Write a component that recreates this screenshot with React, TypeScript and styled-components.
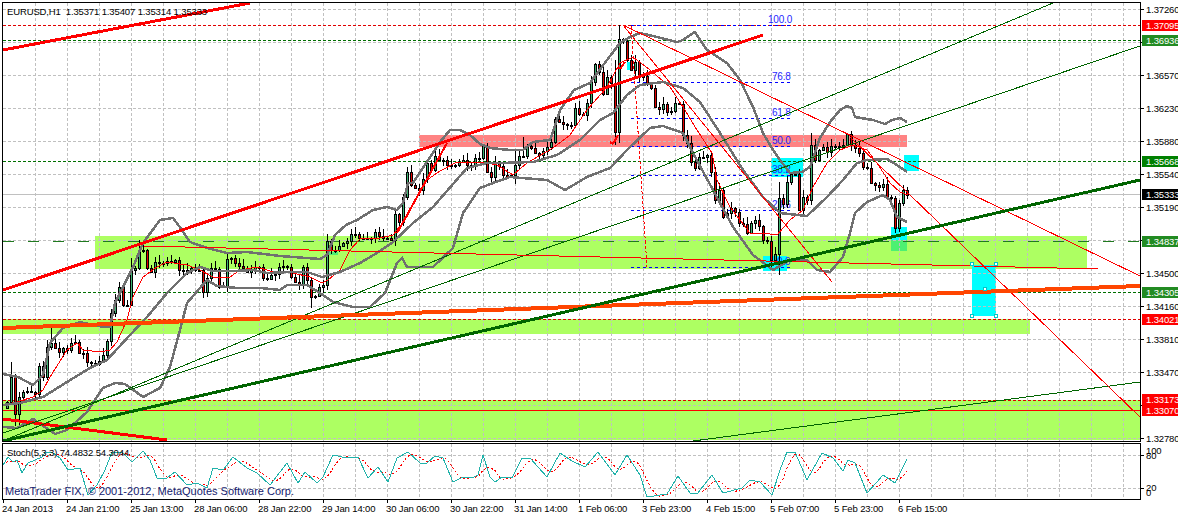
import React from "react";
import styled, { createGlobalStyle } from "styled-components";

// every chart coordinate below is a page pixel, the svg viewBox takes care of the pane offset
const closes = [
  402, 377, 414, 397, 392, 391, 392, 394, 366, 377, 347, 343, 348, 352, 348, 350,
  343, 342, 353, 353, 362, 363, 364, 361, 355, 341, 313, 300, 287, 305, 305, 270,
  268, 250, 250, 268, 272, 262, 263, 263, 261, 262, 260, 270, 270, 271, 268, 270,
  270, 292, 278, 268, 269, 287, 286, 259, 258, 263, 266, 268, 272, 269, 267, 267,
  278, 279, 275, 274, 267, 266, 267, 277, 282, 284, 267, 280, 297, 296, 287, 285,
  241, 250, 250, 246, 243, 241, 234, 234, 238, 238, 238, 238, 232, 236, 238, 238,
  240, 214, 222, 197, 172, 185, 188, 190, 179, 163, 170, 156, 160, 160, 165, 165,
  165, 162, 160, 165, 166, 158, 158, 146, 172, 177, 163, 166, 175, 177, 175, 165,
  156, 156, 146, 148, 153, 155, 151, 147, 142, 119, 122, 124, 125, 125, 108, 114,
  115, 103, 82, 64, 72, 94, 77, 83, 132, 39, 41, 60, 70, 62, 77, 76,
  83, 88, 107, 109, 104, 112, 111, 103, 104, 135, 143, 162, 168, 157, 157, 155,
  172, 200, 190, 217, 213, 208, 212, 223, 224, 233, 223, 220, 226, 240, 241, 260,
  254, 198, 204, 182, 174, 174, 210, 197, 200, 145, 160, 150, 147, 152, 146, 146,
  147, 145, 134, 145, 148, 153, 167, 168, 183, 185, 187, 184, 197, 198, 228, 203,
  190, 195,
];

const wickOverrides: Record<number, [number, number]> = {
  11: [362, 404],
  15: [374, 426],
  19: [392, 425],
  51: [328, 350],
  119: [282, 303],
  131: [258, 295],
  139: [240, 270],
  311: [278, 308],
  515: [150, 184],
  523: [137, 158],
  615: [60, 145],
  619: [25, 143],
  771: [236, 268],
  779: [182, 275],
  811: [133, 205],
  895: [196, 233],
  899: [200, 232],
  903: [185, 206],
};

const upperBand =
  "3,374 18,377 33,385 43,375 50,343 63,328 80,322 97,326 110,327 115,303 133,267 143,243 160,220 173,218 182,230 190,242 207,248 227,253 247,252 280,256 320,259 327,255 335,235 346,225 357,220 373,210 387,207 397,210 403,203 408,183 413,183 427,162 440,142 450,130 460,130 470,135 480,144 490,148 510,150 523,150 533,142 550,140 553,132 560,110 574,90 590,83 607,60 620,43 630,37 640,33 657,37 677,42 683,40 695,32 707,50 727,63 740,80 753,107 763,133 773,150 780,160 790,173 802,172 810,167 820,138 830,122 840,110 847,106 852,108 855,117 873,120 885,124 892,120 900,118 907,122";
const middleBand =
  "3,405 20,403 43,397 67,382 90,368 107,360 130,335 147,317 167,293 187,273 200,267 213,271 233,271 253,270 267,273 290,272 307,272 322,277 340,272 360,263 377,253 393,242 413,223 433,207 467,168 487,163 500,163 533,162 557,155 580,140 600,120 613,113 627,95 640,85 663,82 683,88 700,102 720,133 743,170 763,197 780,213 807,216 827,197 843,180 857,163 867,160 887,159 897,165 907,172";
const lowerBand =
  "3,427 17,428 33,419 55,434 67,430 87,412 103,388 115,383 125,384 143,397 160,388 170,367 180,330 187,303 200,288 207,280 217,286 237,288 260,288 280,290 287,285 307,285 323,295 333,302 353,307 370,307 385,293 397,263 402,258 407,267 433,267 453,248 463,213 480,188 493,183 510,177 547,180 565,190 587,177 610,168 627,150 650,128 663,126 683,133 693,153 713,190 733,227 753,255 773,270 790,260 807,260 817,270 830,272 843,257 850,233 855,213 867,202 883,195 890,200 897,217 907,222";
const movingAverage =
  "3,405 17,402 33,397 43,390 50,377 67,350 77,343 83,350 100,352 110,350 117,342 127,320 133,297 143,277 157,267 167,262 187,265 200,270 213,277 230,277 240,270 257,267 273,272 293,273 310,277 322,283 328,280 340,270 350,250 360,239 380,238 393,235 407,217 420,190 427,180 440,171 457,162 470,163 483,162 497,165 513,175 527,163 553,148 570,135 587,110 607,87 620,63 633,57 650,70 670,87 683,107 697,130 712,153 717,180 730,207 750,233 763,233 777,235 790,220 803,210 813,187 827,163 840,150 853,145 867,150 877,163 890,183 900,192 908,195";

const stochMain: [number, number][] = [
  [3, 465], [8, 457], [13, 462], [17, 460], [22, 473], [28, 463], [35, 460], [42, 457], [45, 452], [53, 453],
  [60, 458], [68, 470], [80, 468], [88, 495], [97, 485], [105, 470], [112, 452], [123, 453], [132, 462], [143, 451],
  [150, 460], [157, 478], [167, 478], [175, 472], [187, 485], [197, 483], [207, 488], [213, 468], [223, 470], [233, 457],
  [247, 468], [257, 473], [270, 485], [287, 463], [298, 483], [305, 472], [317, 483], [323, 477], [333, 455], [347, 458],
  [358, 457], [368, 478], [378, 467], [388, 482], [397, 458], [408, 452], [420, 463], [427, 463], [435, 456], [443, 458],
  [453, 482], [463, 477], [472, 478], [478, 475], [483, 455], [490, 477], [495, 482], [502, 477], [512, 478], [522, 458],
  [530, 458], [547, 477], [560, 453], [572, 461], [585, 467], [598, 452], [615, 475], [627, 455], [640, 475], [647, 497],
  [667, 494], [678, 476], [690, 493], [697, 494], [712, 475], [723, 493], [742, 488], [750, 480], [760, 482], [772, 495],
  [780, 470], [787, 452], [795, 452], [807, 480], [822, 453], [833, 458], [843, 471], [848, 460], [855, 463], [867, 493],
  [877, 482], [883, 475], [895, 483], [907, 459],
];

const zones = [
  { x: 95, y: 236, w: 992, h: 33, fill: "#adff62" },
  { x: 3, y: 319, w: 1027, h: 15, fill: "#adff62" },
  { x: 3, y: 400, w: 1137, h: 40, fill: "#adff62" },
  { x: 419, y: 135, w: 488, h: 12, fill: "#ff8383" },
  { x: 771, y: 158, w: 32, h: 19, fill: "#00ffff" },
  { x: 904, y: 155, w: 15, h: 16, fill: "#00ffff" },
  { x: 763, y: 256, w: 24, h: 15, fill: "#00ffff" },
  { x: 891, y: 227, w: 16, h: 13, fill: "#00ffff" },
  { x: 891, y: 240, w: 16, h: 11, fill: "#4df072" },
  { x: 328, y: 252, w: 10, h: 3, fill: "#4df072" },
  { x: 627, y: 62, w: 3, h: 8, fill: "#00ffff" },
  { x: 972, y: 265, w: 24, h: 51, fill: "#00ffff" },
];

const levels = [
  { y: 25, color: "#e00000", dash: "3 2" },
  { y: 40, color: "#007000", dash: "3 2" },
  { y: 161, color: "#007000", dash: "3 2" },
  { y: 241, color: "#1f7a1f", dash: "11 14" },
  { y: 292, color: "#007000", dash: "3 2" },
  { y: 319, color: "#e00000", dash: "3 2" },
  { y: 400, color: "#e00000", dash: "3 2" },
  { y: 410, color: "#ff0000" },
];

const trendLines = [
  { x1: 3, y1: 50, x2: 250, y2: 3, color: "#ff0000", width: 3 },
  { x1: 3, y1: 290, x2: 763, y2: 35, color: "#ff0000", width: 3 },
  { x1: 3, y1: 419, x2: 167, y2: 440, color: "#ff0000", width: 3 },
  { x1: 3, y1: 441, x2: 1053, y2: 3, color: "#006400", width: 1 },
  { x1: 3, y1: 433, x2: 1140, y2: 46, color: "#006400", width: 1 },
  { x1: 693, y1: 441, x2: 1140, y2: 382, color: "#006400", width: 1 },
  { x1: 143, y1: 246, x2: 1098, y2: 269, color: "#ff0000", width: 1 },
  { x1: 623, y1: 25, x2: 1140, y2: 276, color: "#ff0000", width: 1 },
  { x1: 623, y1: 25, x2: 832, y2: 282, color: "#ff0000", width: 1 },
  { x1: 850, y1: 137, x2: 1140, y2: 417, color: "#ff0000", width: 1 },
  { x1: 397, y1: 233, x2: 447, y2: 143, color: "#ff0000", width: 2 },
  { x1: 620, y1: 83, x2: 653, y2: 72, color: "#ff0000", width: 1 },
  { x1: 610, y1: 142, x2: 613, y2: 144, color: "#ff0000", width: 2 },
  { x1: 613, y1: 144, x2: 618, y2: 135, color: "#ff0000", width: 2 },
  { x1: 618, y1: 67, x2: 620, y2: 69, color: "#ff0000", width: 2 },
  { x1: 620, y1: 69, x2: 625, y2: 62, color: "#ff0000", width: 2 },
  { x1: 3, y1: 328, x2: 1140, y2: 286, color: "#ff4500", width: 4 },
  { x1: 3, y1: 441, x2: 1140, y2: 180, color: "#006400", width: 3 },
];

const fibLevels = [
  { y: 25, label: "100.0", x: 768 },
  { y: 82, label: "76.8", x: 772 },
  { y: 118, label: "61.8", x: 772 },
  { y: 146, label: "50.0", x: 772 },
  { y: 175, label: "38.2", x: 772 },
  { y: 210, label: "23.6", x: 772 },
  { y: 267, label: "0.0", x: 777 },
];

const handles = [
  [972, 264],
  [996, 264],
  [985, 289],
  [972, 316],
  [996, 316],
];

const gridRows = [9, 42, 75, 108, 141, 174, 207, 240, 273, 306, 339, 372, 405, 438];
const gridColumns = Array.from({ length: 35 }, (_, i) => 35 + i * 32);

const priceLabels: { y: number; text: string; tone?: string }[] = [
  { y: 9, text: "1.37260" },
  { y: 25, text: "1.37095", tone: "#ff0000" },
  { y: 40, text: "1.36936", tone: "#228b22" },
  { y: 75, text: "1.36570" },
  { y: 108, text: "1.36230" },
  { y: 141, text: "1.35880" },
  { y: 161, text: "1.35668", tone: "#008000" },
  { y: 174, text: "1.35540" },
  { y: 194, text: "1.35333", tone: "#000000" },
  { y: 207, text: "1.35190" },
  { y: 241, text: "1.34837", tone: "#228b22" },
  { y: 273, text: "1.34500" },
  { y: 292, text: "1.34305", tone: "#228b22" },
  { y: 306, text: "1.34160" },
  { y: 319, text: "1.34021", tone: "#ff0000" },
  { y: 339, text: "1.33810" },
  { y: 372, text: "1.33470" },
  { y: 399, text: "1.33173", tone: "#ff0000" },
  { y: 410, text: "1.33070", tone: "#ff0000" },
  { y: 438, text: "1.32780" },
];

const stochLabels = [
  { y: 450, text: "100" },
  { y: 455, text: "80" },
  { y: 487, text: "20" },
  { y: 492, text: "0" },
];

const timeLabels = [
  "24 Jan 2013",
  "24 Jan 21:00",
  "25 Jan 13:00",
  "28 Jan 06:00",
  "28 Jan 22:00",
  "29 Jan 14:00",
  "30 Jan 06:00",
  "30 Jan 22:00",
  "31 Jan 14:00",
  "1 Feb 06:00",
  "3 Feb 23:00",
  "4 Feb 15:00",
  "5 Feb 07:00",
  "5 Feb 23:00",
  "6 Feb 15:00",
];

// the signal line is just the main line sampled every bar and averaged
function signalLine() {
  const samples: number[][] = [];
  for (let x = 3; x <= 907; x += 4) {
    const next = stochMain.findIndex((p) => p[0] >= x);
    const b = stochMain[Math.max(next, 0)];
    const a = stochMain[Math.max(next - 1, 0)];
    const t = b[0] === a[0] ? 0 : (x - a[0]) / (b[0] - a[0]);
    samples.push([x, a[1] + (b[1] - a[1]) * t]);
  }
  return samples
    .map(([x], i) => {
      const from = Math.max(0, i - 3);
      const part = samples.slice(from, i + 1);
      const avg = part.reduce((sum, p) => sum + p[1], 0) / part.length;
      return `${x},${avg.toFixed(1)}`;
    })
    .join(" ");
}

function Candles() {
  return (
    <g>
      {closes.map((close, i) => {
        const x = 7 + i * 4;
        const open = i === 0 ? close + 6 : closes[i - 1];
        const top = Math.min(open, close);
        const bottom = Math.max(open, close);
        const wick = wickOverrides[x] ?? [top - 1 - ((i * 37) % 7), bottom + 1 + ((i * 53) % 6)];
        return (
          <g key={x}>
            <line x1={x + 0.5} x2={x + 0.5} y1={wick[0]} y2={wick[1]} stroke="#000" />
            <rect
              x={x - 0.5}
              y={top + 0.5}
              width={2}
              height={Math.max(bottom - top, 1)}
              fill={close < open ? "#3cb371" : "#e00000"}
              stroke="#000"
            />
          </g>
        );
      })}
    </g>
  );
}

function MainChart() {
  return (
    <ChartSvg viewBox="3 3 1137 438" width={1137} height={438}>
      {zones.map((z) => (
        <rect key={`${z.x}-${z.y}`} x={z.x} y={z.y} width={z.w} height={z.h} fill={z.fill} />
      ))}
      {gridRows.map((y) => (
        <line key={y} x1={3} x2={1140} y1={y + 0.5} y2={y + 0.5} stroke="#c0c0c0" strokeDasharray="3 2" />
      ))}
      {gridColumns.map((x) => (
        <line key={x} x1={x + 0.5} x2={x + 0.5} y1={3} y2={441} stroke="#c0c0c0" strokeDasharray="3 2" />
      ))}
      <line x1={3} x2={1140} y1={194.5} y2={194.5} stroke="#c0c0c0" />
      {levels.map((l) => (
        <line
          key={l.y}
          x1={3}
          x2={1140}
          y1={l.y + 0.5}
          y2={l.y + 0.5}
          stroke={l.color}
          strokeDasharray={l.dash}
        />
      ))}
      <line x1={631} y1={26} x2={647} y2={267} stroke="#ff0000" strokeDasharray="3 2" />
      {fibLevels.map((f) => (
        <g key={f.label}>
          <line x1={631} x2={790} y1={f.y + 0.5} y2={f.y + 0.5} stroke="#0000ff" strokeDasharray="3 3" />
          <FibLabel x={f.x} y={f.y - 2}>
            {f.label}
          </FibLabel>
        </g>
      ))}
      <Candles />
      <polyline points={movingAverage} fill="none" stroke="#ff0000" />
      <polyline points={upperBand} fill="none" stroke="#707070" strokeWidth={2.5} />
      <polyline points={middleBand} fill="none" stroke="#707070" strokeWidth={2.5} />
      <polyline points={lowerBand} fill="none" stroke="#707070" strokeWidth={2.5} />
      {trendLines.map((t) => (
        <line
          key={`${t.x1}-${t.y1}-${t.x2}`}
          x1={t.x1}
          y1={t.y1}
          x2={t.x2}
          y2={t.y2}
          stroke={t.color}
          strokeWidth={t.width}
        />
      ))}
      {handles.map(([x, y]) => (
        <rect key={`${x}-${y}`} x={x - 1.5} y={y - 1.5} width={3} height={3} fill="#fff" stroke="#00c8c8" />
      ))}
    </ChartSvg>
  );
}

function StochChart() {
  return (
    <ChartSvg viewBox="3 444 1137 55" width={1137} height={55}>
      {[455, 488].map((y) => (
        <line key={y} x1={3} x2={1140} y1={y + 0.5} y2={y + 0.5} stroke="#c0c0c0" strokeDasharray="3 2" />
      ))}
      {gridColumns.map((x) => (
        <line key={x} x1={x + 0.5} x2={x + 0.5} y1={444} y2={499} stroke="#c0c0c0" strokeDasharray="3 2" />
      ))}
      <polyline points={signalLine()} fill="none" stroke="#ff0000" strokeDasharray="2 2" />
      <polyline points={stochMain.map((p) => p.join(",")).join(" ")} fill="none" stroke="#20b2aa" />
    </ChartSvg>
  );
}

export default function App() {
  return (
    <>
      <GlobalStyle />
      <Terminal>
        <ChartColumn>
          <MainPane>
            <MainChart />
            <Legend>EURUSD,H1&nbsp;&nbsp;1.35371 1.35407 1.35314 1.35333</Legend>
          </MainPane>
          <StochPane>
            <StochChart />
            <Legend>Stoch(5,3,3) 74.4832 54.3044</Legend>
            <Copyright>MetaTrader FIX, © 2001-2012, MetaQuotes Software Corp.</Copyright>
          </StochPane>
          <TimeAxis>
            {timeLabels.map((label) => (
              <TimeCell key={label}>{label}</TimeCell>
            ))}
          </TimeAxis>
        </ChartColumn>
        <PriceAxis>
          {gridRows.map((y) => (
            <Tick key={y} $y={y} />
          ))}
          {[455, 488].map((y) => (
            <Tick key={y} $y={y} />
          ))}
          {priceLabels.map((p) => (
            <PriceLabel key={p.text} $y={p.y} $tone={p.tone}>
              {p.text}
            </PriceLabel>
          ))}
          {stochLabels.map((s) => (
            <PriceLabel key={s.text} $y={s.y}>
              {s.text}
            </PriceLabel>
          ))}
        </PriceAxis>
      </Terminal>
    </>
  );
}

const GlobalStyle = createGlobalStyle`
  html, body {
    margin: 0;
    padding: 0;
    background: #fff;
  }
`;

const Terminal = styled.div`
  display: flex;
  width: 1178px;
  height: 516px;
  padding: 2px 0 0 2px;
  box-sizing: border-box;
  overflow: hidden;
  background: #fff;
  color: #000;
  font-family: "Liberation Sans", Arial, sans-serif;
  font-size: 9.5px;
  letter-spacing: -0.13px;
`;

const ChartColumn = styled.div`
  display: flex;
  flex-direction: column;
  width: 1139px;
  flex: none;
`;

const Pane = styled.div`
  position: relative;
  border: 1px solid #000;
  overflow: hidden;
`;

const MainPane = styled(Pane)`
  height: 438px;
`;

const StochPane = styled(Pane)`
  height: 55px;
  margin-top: 1px;
`;

const ChartSvg = styled.svg`
  display: block;
  shape-rendering: crispEdges;
`;

const FibLabel = styled.text`
  fill: #1f1fff;
  font-size: 10px;
  letter-spacing: -0.2px;
  font-family: "Liberation Sans", Arial, sans-serif;
`;

const Legend = styled.div`
  position: absolute;
  top: 3px;
  left: 4px;
  line-height: 11px;
  white-space: nowrap;
`;

const Copyright = styled.div`
  position: absolute;
  left: 2px;
  bottom: 1px;
  font-size: 11px;
  letter-spacing: 0;
  line-height: 13px;
  color: #14206e;
  white-space: nowrap;
`;

const TimeAxis = styled.div`
  display: flex;
`;

const TimeCell = styled.div`
  position: relative;
  flex: none;
  width: 64px;
  padding-top: 3px;
  line-height: 11px;
  white-space: nowrap;

  &::before {
    content: "";
    position: absolute;
    top: 0;
    left: 1px;
    width: 1px;
    height: 3px;
    background: #000;
  }
`;

const PriceAxis = styled.div`
  position: relative;
  flex: 1;
  overflow: hidden;
`;

const Tick = styled.div<{ $y: number }>`
  position: absolute;
  left: 0;
  top: ${({ $y }) => $y - 2}px;
  width: 3px;
  height: 1px;
  background: #000;
`;

const PriceLabel = styled.div<{ $y: number; $tone?: string }>`
  position: absolute;
  left: 1px;
  right: 0;
  top: ${({ $y }) => $y - 7.5}px;
  height: 11px;
  padding-left: 4px;
  line-height: 11px;
  background: ${({ $tone }) => $tone ?? "transparent"};
  color: ${({ $tone }) => ($tone ? "#fff" : "#000")};
  white-space: nowrap;
`;
